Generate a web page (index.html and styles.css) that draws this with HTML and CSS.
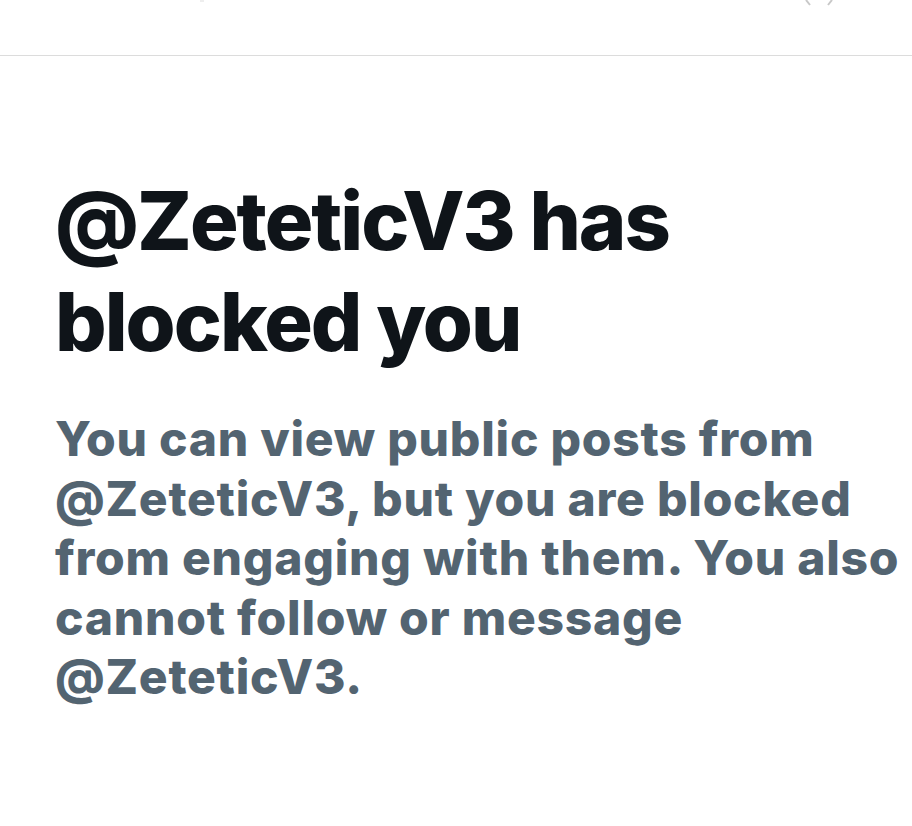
FILE: index.html
```html
<!DOCTYPE html>
<html lang="en">
<head>
<meta charset="utf-8">
<title>Blocked</title>
<link rel="stylesheet" href="styles.css">
</head>
<body>
<header class="topbar">
  <span class="top-mark left"></span>
  <span class="top-mark right">
    <svg width="32" height="6" viewBox="0 0 32 6"><path d="M2 0 L6 5 M28 0 L24 5" stroke="#c8c8c8" stroke-width="2" fill="none"/></svg>
  </span>
</header>
<main class="content">
  <h1 class="title">@ZeteticV3 has<br>blocked you</h1>
  <p class="desc">You can view public posts from<br>@ZeteticV3, but you are blocked<br>from engaging with them. You also<br>cannot follow or message<br>@ZeteticV3.</p>
</main>
</body>
</html>
```
FILE: styles.css
```css
html, body {
  margin: 0;
  padding: 0;
  background: #ffffff;
}
body {
  width: 912px;
  height: 826px;
  overflow: hidden;
  font-family: Inter, "Liberation Sans", Arial, sans-serif;
}
.topbar {
  height: 55px;
  border-bottom: 1px solid #dcdcdc;
  display: flex;
  justify-content: space-between;
  align-items: flex-start;
  padding: 0 76px 0 200px;
}
.top-mark.left {
  width: 4px;
  height: 2px;
  background: #eeeeee;
}
.top-mark.right svg { display: block; }
.content {
  padding: 0 4px 0 55px;
}
.title {
  margin: 0;
  padding-top: 115px;
  font-size: 81px;
  line-height: 101px;
  font-weight: 800;
  color: #0f1419;
  letter-spacing: -2px;
  white-space: nowrap;
}
.desc {
  margin: 0;
  padding-top: 36px;
  font-size: 48px;
  line-height: 59.5px;
  font-weight: 800;
  color: #536471;
  letter-spacing: 0.75px;
  white-space: nowrap;
}
```
